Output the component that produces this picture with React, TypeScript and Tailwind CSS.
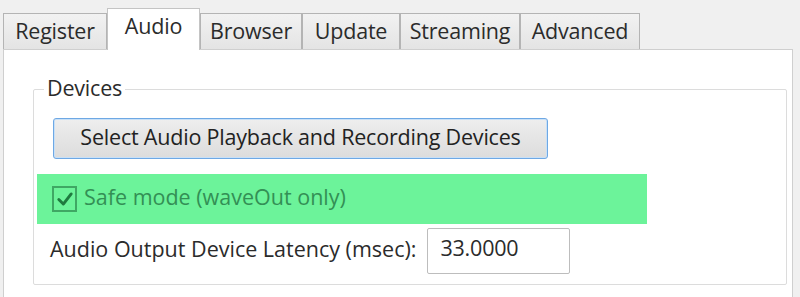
import React from "react";

const tabs = [
  { label: "Register", w: "w-[104px]" },
  { label: "Audio", w: "w-[93px]", active: true },
  { label: "Browser", w: "w-[102px]" },
  { label: "Update", w: "w-[98px]" },
  { label: "Streaming", w: "w-[120px]" },
  { label: "Advanced", w: "w-[120px]" },
];

export default function App() {
  return (
    <div
      className="w-[800px] h-[297px] overflow-hidden bg-[#f0f0f0] text-[#2b2b2b] text-[21.5px] tracking-[-0.2px]"
      style={{ fontFamily: '"Open Sans", "Noto Sans", sans-serif' }}
    >
      {/* tab strip */}
      <div className="flex items-end pl-[3px] pt-[7px] h-[49px]">
        {tabs.map((t) =>
          t.active ? (
            <div
              key={t.label}
              className={`${t.w} h-[42px] -mb-px relative z-10 bg-white border border-b-0 border-[#c4c4c4] flex items-center justify-center pb-[6px]`}
            >
              {t.label}
            </div>
          ) : (
            <div
              key={t.label}
              className={`${t.w} h-[36px] bg-gradient-to-b from-[#f2f2f2] to-[#e4e4e4] border border-b-0 border-[#b4b4b4] flex items-center justify-center`}
            >
              {t.label}
            </div>
          )
        )}
      </div>

      {/* page */}
      <div className="ml-[3px] w-[790px] h-[260px] bg-white border border-[#cfcfcf] pt-[39px] pl-[29px]">
        <div className="relative w-[754px] h-[196px] border border-[#dcdcdc] rounded-[2px]">
          <span className="absolute left-[10px] -top-[15px] bg-white px-[3px] leading-[26px]">
            Devices
          </span>

          <div className="pt-[28px] pl-[19px]">
            <button className="w-[495px] h-[41px] rounded-[3px] border border-[#6ea8e4] bg-gradient-to-b from-[#eeeeee] to-[#dcdcdc] shadow-[inset_0_0_0_1px_#c8e0f7] flex items-center justify-center text-[#222] pb-[2px]">
              Select Audio Playback and Recording Devices
            </button>
          </div>

          <div className="mt-[15px] ml-[3px] w-[610px] h-[50px] bg-[#6cf39a] flex items-center pl-[15px] gap-[7px] text-[#338f55]">
            <span className="w-[25px] h-[26px] border-2 border-[#3fa764] flex items-center justify-center">
              <svg viewBox="0 0 16 16" className="w-[18px] h-[18px]">
                <path
                  d="M2.5 8.5 L6.5 12.5 L13.5 3.5"
                  fill="none"
                  stroke="#1f7a3f"
                  strokeWidth="2.6"
                  strokeLinecap="round"
                  strokeLinejoin="round"
                />
              </svg>
            </span>
            <span className="pb-[3px] tracking-[0px]">Safe mode (waveOut only)</span>
          </div>

          <div className="mt-[4px] ml-[16px] flex items-center gap-[11px]">
            <span className="pb-[4px] tracking-[0px]">Audio Output Device Latency (msec):</span>
            <div className="w-[143px] h-[46px] border border-[#bdbdbd] rounded-[2px] flex items-center pl-[12px] pb-[6px]">
              33.0000
            </div>
          </div>
        </div>
      </div>
    </div>
  );
}
